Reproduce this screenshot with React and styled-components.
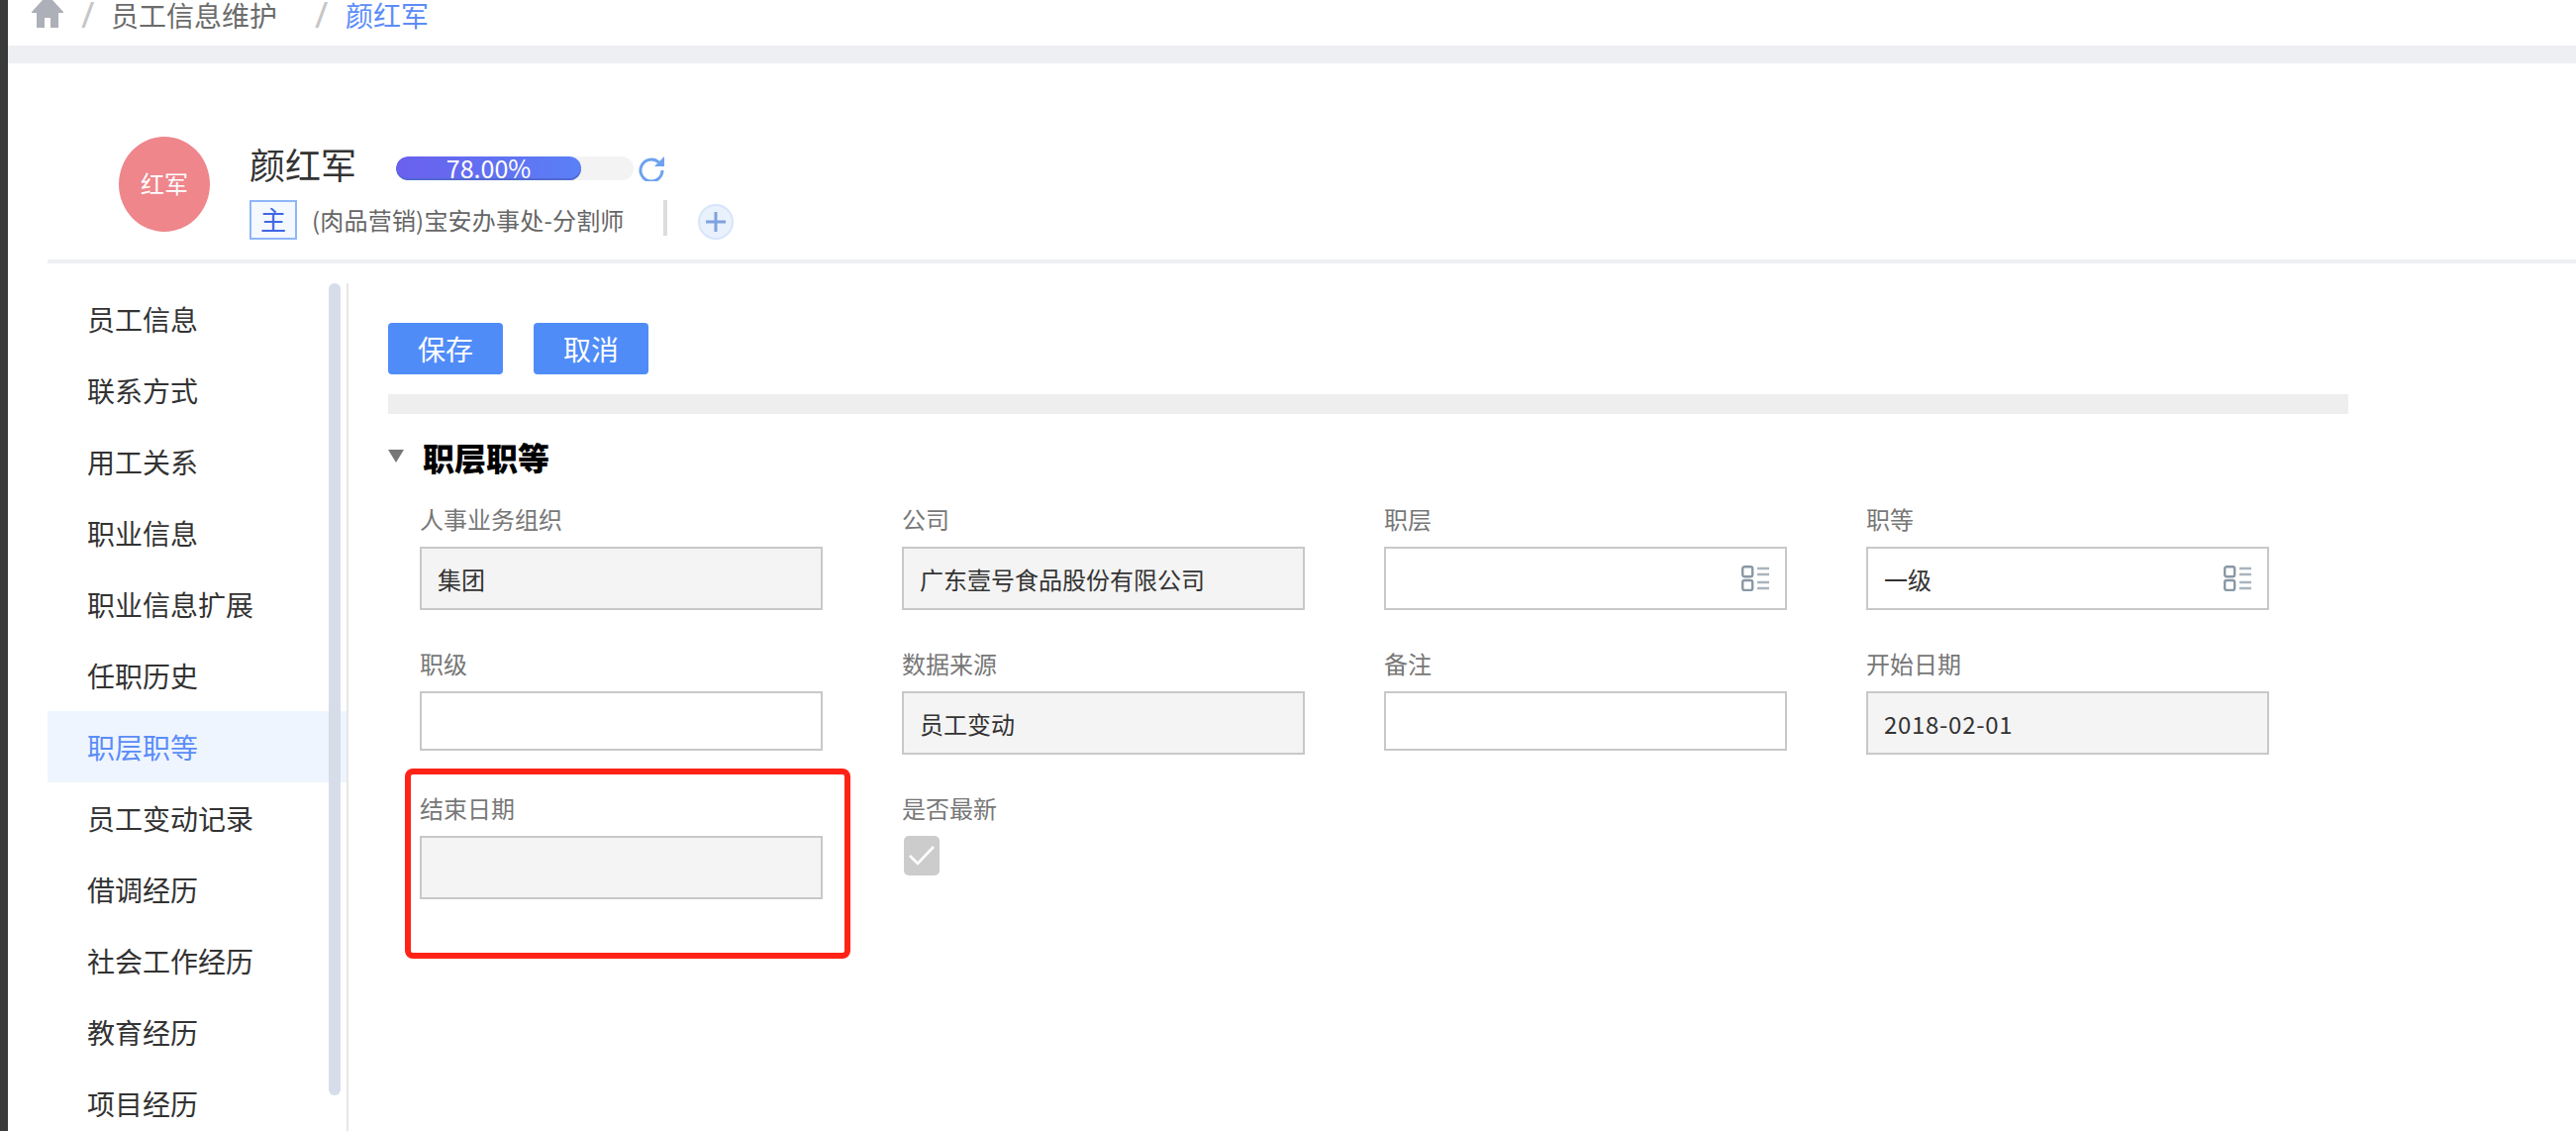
import React from "react";
import styled, { createGlobalStyle } from "styled-components";

const Global = createGlobalStyle`
  html, body { margin: 0; padding: 0; background: #fff; overflow: hidden; }
  body { font-family: "Noto Sans CJK SC", "Liberation Sans", sans-serif; }
`;

const Page = styled.div`
  display: flex;
  width: 2602px;
  height: 1142px;
  overflow: hidden;
  background: #fff;
`;
const Rail = styled.div`
  flex: 0 0 8px;
  background: #3a3a3a;
`;
const Content = styled.div`
  flex: 1;
  min-width: 0;
  display: flex;
  flex-direction: column;
`;
const Breadcrumb = styled.nav`
  flex: 0 0 46px;
  display: flex;
  align-items: flex-start;
  padding-left: 24px;
  font-size: 28px;
  line-height: 30px;
  color: #6b6b6b;
  overflow: hidden;
`;
const Slash = styled.span`
  width: 12px;
  margin: 0 ${(p) => p.$after}px 0 ${(p) => p.$before}px;
  color: #c6c6c6;
  font-family: "Noto Sans", sans-serif;
  font-size: 36px;
  text-align: center;
`;
const Crumb = styled.span`
  color: ${(p) => (p.$current ? "#5b8df8" : "#6b6b6b")};
`;
const Band = styled.div`
  flex: 0 0 18px;
  background: #eeeff3;
`;
const Profile = styled.header`
  flex: 0 0 198px;
  display: flex;
  padding-left: 112px;
`;
const Avatar = styled.div`
  width: 92px;
  height: 96px;
  box-sizing: border-box;
  padding-bottom: 3px;
  margin-top: 74px;
  border-radius: 50%;
  background: #ee868c;
  color: #fff;
  font-size: 24px;
  display: flex;
  align-items: center;
  justify-content: center;
`;
const Info = styled.div`
  margin-left: 40px;
  padding-top: 82px;
  display: flex;
  flex-direction: column;
`;
const NameRow = styled.div`
  display: flex;
  align-items: flex-start;
  height: 56px;
`;
const Name = styled.div`
  width: 148px;
  font-size: 36px;
  line-height: 38px;
  color: #333;
`;
const Track = styled.div`
  width: 240px;
  height: 24px;
  margin-top: 12px;
  border-radius: 12px;
  background: #f3f3f3;
  overflow: hidden;
`;
const Fill = styled.div`
  width: ${(p) => p.$value}%;
  height: 24px;
  box-sizing: border-box;
  border-radius: 12px;
  background: linear-gradient(90deg, #6a60ee, #5a80f6);
  box-shadow: inset 0 -2px 0 #5169cf;
  color: #fff;
  font-size: 25px;
  line-height: 22px;
  text-align: center;
`;
const RefreshIcon = styled.svg`
  width: 26px;
  height: 26px;
  margin: 11px 0 0 5px;
`;
const SubRow = styled.div`
  display: flex;
  align-items: flex-start;
  height: 40px;
`;
const Badge = styled.div`
  width: 48px;
  height: 40px;
  box-sizing: border-box;
  border: 2px solid #8fb6f8;
  background: #f4f8ff;
  color: #3f66e4;
  font-size: 26px;
  line-height: 34px;
  text-align: center;
`;
const Post = styled.div`
  width: 355px;
  margin-left: 15px;
  font-size: 24px;
  line-height: 40px;
  letter-spacing: 0.2px;
  color: #666;
`;
const VRule = styled.div`
  width: 4px;
  height: 36px;
  background: #dcdcdc;
`;
const PlusIcon = styled.svg`
  width: 36px;
  height: 36px;
  margin: 4px 0 0 31px;
`;
const HRule = styled.div`
  flex: 0 0 4px;
  margin-left: 40px;
  background: #eeeff3;
`;
const Body = styled.div`
  flex: 1;
  min-height: 0;
  display: flex;
  padding-top: 20px;
`;
const Sidebar = styled.aside`
  position: relative;
  flex: 0 0 304px;
  box-sizing: border-box;
  margin-left: 40px;
  border-right: 2px solid #e6e6e6;
  overflow: hidden;
`;
const SideItem = styled.div`
  height: 72px;
  padding-left: 40px;
  font-size: 28px;
  line-height: 72px;
  color: ${(p) => (p.$active ? "#5b8df8" : "#333")};
  background: ${(p) => (p.$active ? "#eff5fe" : "transparent")};
`;
const Thumb = styled.div`
  position: absolute;
  left: 284px;
  top: 0;
  width: 12px;
  height: 820px;
  border-radius: 6px;
  background: #d6dde9;
`;
const Main = styled.main`
  flex: 1;
  min-width: 0;
  padding: 40px 0 0 40px;
`;
const Toolbar = styled.div`
  display: flex;
  gap: 31px;
`;
const Button = styled.button`
  width: 116px;
  height: 52px;
  padding: 0;
  border: 0;
  border-radius: 4px;
  background: #508cf8;
  color: #fff;
  font-family: inherit;
  font-size: 28px;
`;
const GrayBar = styled.div`
  width: 1980px;
  height: 20px;
  margin-top: 20px;
  background: #eeeeee;
`;
const SectionHead = styled.div`
  display: flex;
  align-items: center;
  height: 30px;
  margin-top: 29px;
`;
const Triangle = styled.span`
  width: 0;
  height: 0;
  border-left: 8px solid transparent;
  border-right: 8px solid transparent;
  border-top: 13px solid #777;
  margin-top: -4px;
`;
const Title = styled.h2`
  margin: 0 0 3px 19px;
  font-size: 32px;
  line-height: 30px;
  font-weight: 900;
  color: #000;
`;
const Grid = styled.div`
  display: grid;
  grid-template-columns: repeat(4, 407px);
  grid-auto-rows: 146px;
  column-gap: 80px;
  margin: 29px 0 0 32px;
`;
const Field = styled.div`
  position: relative;
`;
const Label = styled.div`
  height: 46px;
  font-size: 24px;
  line-height: 35px;
  color: #777;
`;
const Input = styled.div`
  display: flex;
  align-items: center;
  justify-content: space-between;
  box-sizing: border-box;
  height: ${(p) => (p.$short ? 60 : 64)}px;
  padding: 0 16px;
  border: 2px solid #c8c8c8;
  background: ${(p) => (p.$disabled ? "#f4f4f4" : "#fff")};
  font-size: 24px;
  color: #333;
`;
const Value = styled.span`
  margin-top: 1px;
  letter-spacing: ${(p) => (p.$numeric ? "0.7px" : "0")};
`;
const LookupIcon = styled.svg`
  width: 28px;
  height: 26px;
`;
const Check = styled.div`
  display: flex;
  align-items: center;
  justify-content: center;
  width: 36px;
  height: 40px;
  margin-left: 2px;
  border-radius: 5px;
  background: #cccccc;
`;
const Highlight = styled.div`
  position: absolute;
  left: -15px;
  top: -22px;
  width: 450px;
  height: 192px;
  box-sizing: border-box;
  border: 6px solid #ff2317;
  border-radius: 8px;
  pointer-events: none;
`;

const menu = ["员工信息","联系方式","用工关系","职业信息","职业信息扩展","任职历史","职层职等","员工变动记录","借调经历","社会工作经历","教育经历","项目经历"];

const Lookup = () => (
  <LookupIcon viewBox="0 0 28 26" fill="none" stroke="#8a98a5" strokeWidth="2.4">
    <rect x="1.2" y="1.2" width="10" height="10" rx="2" />
    <rect x="1.2" y="15" width="10" height="10" rx="2" />
    <path d="M16 3h12M16 9h12M16 17h12M16 23h12" stroke="#a9b4bd" />
  </LookupIcon>
);

const fields = [
  { label: "人事业务组织", value: "集团", disabled: true },
  { label: "公司", value: "广东壹号食品股份有限公司", disabled: true },
  { label: "职层", lookup: true },
  { label: "职等", value: "一级", lookup: true },
  { label: "职级", short: true },
  { label: "数据来源", value: "员工变动", disabled: true },
  { label: "备注", short: true },
  { label: "开始日期", value: "2018-02-01", disabled: true, numeric: true },
];

export default function App() {
  return (
    <Page>
      <Global />
      <Rail />
      <Content>
        <Breadcrumb>
          <svg width="32" height="28" viewBox="0 0 32 28" fill="#adb0b8">
            <path d="M11 0H21L32 12V13H27V28H19V18H13V28H5V13H0V12Z" />
          </svg>
          <Slash $before={18} $after={18}>/</Slash>
          <Crumb>员工信息维护</Crumb>
          <Slash $before={38} $after={19}>/</Slash>
          <Crumb $current>颜红军</Crumb>
        </Breadcrumb>
        <Band />
        <Profile>
          <Avatar>红军</Avatar>
          <Info>
            <NameRow>
              <Name>颜红军</Name>
              <Track><Fill $value={78}>78.00%</Fill></Track>
              <RefreshIcon viewBox="0 0 26 26" fill="none">
                <path d="M20.5 7A11 11 0 1 0 24 15" stroke="#6ea2ef" strokeWidth="3" />
                <path d="M26 1V11H16Z" fill="#6ea2ef" />
              </RefreshIcon>
            </NameRow>
            <SubRow>
              <Badge>主</Badge>
              <Post>(肉品营销)宝安办事处-分割师</Post>
              <VRule />
              <PlusIcon viewBox="0 0 36 36">
                <circle cx="18" cy="18" r="17" fill="#e9f1fd" stroke="#d7e5fa" strokeWidth="2" />
                <path d="M8 18H28M18 8V28" stroke="#7fa2dc" strokeWidth="3" />
              </PlusIcon>
            </SubRow>
          </Info>
        </Profile>
        <HRule />
        <Body>
          <Sidebar>
            {menu.map((m) => (
              <SideItem key={m} $active={m === "职层职等"}>{m}</SideItem>
            ))}
            <Thumb />
          </Sidebar>
          <Main>
            <Toolbar>
              <Button>保存</Button>
              <Button>取消</Button>
            </Toolbar>
            <GrayBar />
            <SectionHead>
              <Triangle />
              <Title>职层职等</Title>
            </SectionHead>
            <Grid>
              {fields.map((f) => (
                <Field key={f.label}>
                  <Label>{f.label}</Label>
                  <Input $disabled={f.disabled} $short={f.short}>
                    <Value $numeric={f.numeric}>{f.value}</Value>
                    {f.lookup && <Lookup />}
                  </Input>
                </Field>
              ))}
              <Field>
                <Label>结束日期</Label>
                <Input $disabled />
                <Highlight />
              </Field>
              <Field>
                <Label>是否最新</Label>
                <Check>
                  <svg width="28" height="24" viewBox="0 0 28 24" fill="none">
                    <path d="M2 12L10 20L26 3" stroke="#fff" strokeWidth="2.6" />
                  </svg>
                </Check>
              </Field>
            </Grid>
          </Main>
        </Body>
      </Content>
    </Page>
  );
}
